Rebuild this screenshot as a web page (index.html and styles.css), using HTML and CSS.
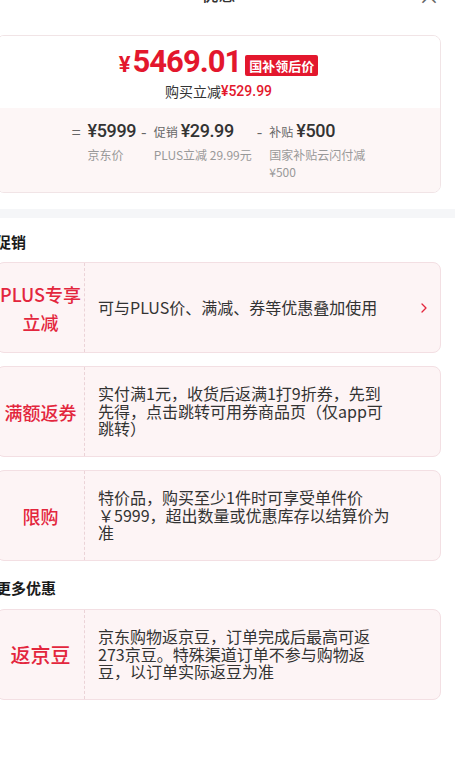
FILE: index.html
```html
<!DOCTYPE html>
<html lang="zh-CN">
<head>
    <meta charset="UTF-8">
    <meta name="viewport" content="width=device-width, initial-scale=1.0">
    <title>优惠</title>
    <link rel="stylesheet" href="styles.css">
</head>
<body>

<div class="sheet">
    <!-- Header -->
    <div class="sheet-head">
        <span class="sheet-title">优惠</span>
        <span class="sheet-close">×</span>
    </div>

    <!-- Price summary -->
    <div class="price-card">
        <div class="price-main">
            <div class="price-row">
                <span class="price-final"><span class="yen">¥</span>5469.01</span>
                <span class="price-tag">国补领后价</span>
            </div>
            <div class="price-save">购买立减<em>¥529.99</em></div>
        </div>
        <div class="price-calc">
            <div class="calc-item">
                <span class="calc-op">=</span>
                <div class="calc-body">
                    <div class="calc-amount"><b>¥5999</b></div>
                    <div class="calc-label">京东价</div>
                </div>
            </div>
            <div class="calc-item">
                <span class="calc-op">-</span>
                <div class="calc-body">
                    <div class="calc-amount"><span>促销</span><b>¥29.99</b></div>
                    <div class="calc-label">PLUS立减 29.99元</div>
                </div>
            </div>
            <div class="calc-item">
                <span class="calc-op">-</span>
                <div class="calc-body">
                    <div class="calc-amount"><span>补贴</span><b>¥500</b></div>
                    <div class="calc-label">国家补贴云闪付减¥500</div>
                </div>
            </div>
        </div>
    </div>

    <div class="divider"></div>

    <!-- Promotions -->
    <section class="promo-group">
        <h3>促销</h3>
        <div class="promo-list">
            <div class="promo-card">
                <div class="promo-tag">PLUS专享<br>立减</div>
                <div class="promo-desc">可与PLUS价、满减、券等优惠叠加使用</div>
                <div class="promo-arrow">
                    <svg width="6" height="10" viewBox="0 0 6 10"><polyline points="1,1 5,5 1,9" fill="none" stroke="#e3263d" stroke-width="1.3" stroke-linecap="round" stroke-linejoin="round"/></svg>
                </div>
            </div>
            <div class="promo-card">
                <div class="promo-tag">满额返券</div>
                <div class="promo-desc">实付满1元，收货后返满1打9折券，先到先得，点击跳转可用券商品页（仅app可跳转）</div>
                <div class="promo-arrow"></div>
            </div>
            <div class="promo-card">
                <div class="promo-tag">限购</div>
                <div class="promo-desc">特价品，购买至少1件时可享受单件价￥5999，超出数量或优惠库存以结算价为准</div>
                <div class="promo-arrow"></div>
            </div>
        </div>
    </section>

    <!-- More offers -->
    <section class="promo-group">
        <h3>更多优惠</h3>
        <div class="promo-list">
            <div class="promo-card">
                <div class="promo-tag big">返京豆</div>
                <div class="promo-desc">京东购物返京豆，订单完成后最高可返273京豆。特殊渠道订单不参与购物返豆，以订单实际返豆为准</div>
                <div class="promo-arrow"></div>
            </div>
        </div>
    </section>
</div>

</body>
</html>
```

FILE: styles.css
```css
body { margin: 0; background: #fff; color: #333; font-family: "Noto Sans CJK SC", "Noto Sans", sans-serif; overflow: hidden; }

.sheet { width: 472px; margin-left: -16px; padding: 0 15px 40px 12px; box-sizing: border-box; }

/* header */
.sheet-head { position: relative; height: 24px; margin-top: -18px; display: flex; justify-content: center; align-items: center; }
.sheet-title { font-size: 17px; line-height: 24px; font-weight: 500; color: #333; }
.sheet-close { position: absolute; right: 1px; top: 0; font-size: 22px; line-height: 24px; color: #666; }

/* price card */
.price-card { margin-top: 29px; border: 1px solid #f1e4e6; border-radius: 8px; overflow: hidden; }
.price-main { background: #fff; padding: 9px 0 7px; text-align: center; }
.price-row { display: flex; justify-content: center; align-items: center; height: 36px; gap: 4px; }
.price-final { font-family: Roboto, "Noto Sans", sans-serif; font-weight: 700; font-size: 31px; line-height: 36px; letter-spacing: -1px; color: #e3172d; }
.price-final .yen { font-size: 22px; letter-spacing: 0; margin-right: 2px; }
.price-tag { margin-top: 5px; background: #e3172d; color: #fff; font-size: 13px; font-weight: 700; line-height: 21px; padding: 0 4px; border-radius: 2px; }
.price-save { height: 20px; display: flex; justify-content: center; align-items: center; font-size: 14px; color: #333; }
.price-save em { font-style: normal; color: #e3172d; font-family: Roboto, sans-serif; font-weight: 500; }

.price-calc { background: #fdf6f6; padding: 12px 0 12px 4px; display: flex; justify-content: center; gap: 5px; }
.calc-item { display: flex; gap: 7px; }
.calc-op { height: 22px; font-size: 16px; line-height: 22px; color: #666; }
.calc-body { max-width: 100px; }
.calc-amount { height: 22px; display: flex; align-items: baseline; white-space: nowrap; }
.calc-amount span { font-size: 12px; color: #666; margin-right: 3px; }
.calc-amount b { font-family: Roboto, sans-serif; font-weight: 500; font-size: 18px; line-height: 22px; letter-spacing: -0.4px; color: #333; }
.calc-label { margin-top: 4px; font-size: 12px; line-height: 17px; color: #999; }

.divider { height: 9px; margin: 16px -15px 0 -12px; background: #f5f6f8; }

/* promotions */
.promo-group h3 { margin: 13px 0 9px; font-size: 15px; line-height: 22px; font-weight: 700; color: #1a1a1a; }
.promo-group + .promo-group h3 { margin: 16px 0 10px; }
.promo-list { display: flex; flex-direction: column; gap: 13px; }
.promo-card { display: flex; min-height: 89px; border: 1px solid #f3dfe3; border-radius: 8px; background: #fdf4f5; }
.promo-tag { width: 88px; flex: none; box-sizing: border-box; border-right: 1px dashed #ebd3d7; display: flex; align-items: center; justify-content: center; text-align: center; font-size: 18px; line-height: 28px; font-weight: 500; color: #e3263d; }
.promo-tag.big { font-size: 20px; }
.promo-desc { flex: 1; align-self: center; padding: 0 15px 0 13px; font-size: 16px; line-height: 17.5px; color: #333; }
.promo-arrow { width: 33px; flex: none; display: flex; align-items: center; justify-content: center; }
```
